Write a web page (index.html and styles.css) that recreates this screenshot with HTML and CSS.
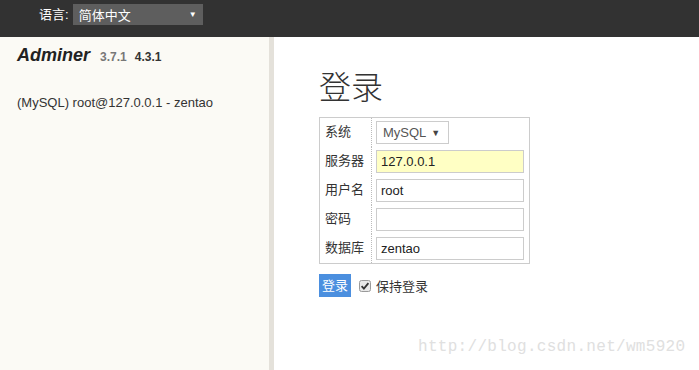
FILE: index.html
```html
<!DOCTYPE html>
<html lang="zh-CN">
    <head>
        <meta charset="UTF-8" />
        <title>登录 - Adminer</title>
        <link rel="stylesheet" href="styles.css">
    </head>
    <body>
        <!-- 顶部语言栏 -->
        <div class="lang-bar">
            <span class="lang-label">语言:</span>
            <div class="lang-select">
                <span>简体中文</span>
                <span class="caret">▼</span>
            </div>
        </div>
        <div class="layout">
            <!-- 左侧菜单 -->
            <div class="menu">
                <h1 class="logo">
                    <span class="logo-name">Adminer</span>
                    <span class="ver-old">3.7.1</span>
                    <span class="ver-new">4.3.1</span>
                </h1>
                <p class="conn">(MySQL) root@127.0.0.1 - zentao</p>
            </div>
            <!-- 登录表单 -->
            <div class="content">
                <h2 class="title">登录</h2>
                <table class="login-table">
                    <tr>
                        <th>系统</th>
                        <td><div class="select">MySQL <span class="caret">▼</span></div></td>
                    </tr>
                    <tr>
                        <th>服务器</th>
                        <td><div class="input input-hl">127.0.0.1</div></td>
                    </tr>
                    <tr>
                        <th>用户名</th>
                        <td><div class="input">root</div></td>
                    </tr>
                    <tr>
                        <th>密码</th>
                        <td><div class="input"></div></td>
                    </tr>
                    <tr>
                        <th>数据库</th>
                        <td><div class="input">zentao</div></td>
                    </tr>
                </table>
                <div class="actions">
                    <span class="btn">登录</span>
                    <span class="check">
                        <svg width="12" height="12" viewBox="0 0 12 12">
                            <rect x="0.5" y="0.5" width="11" height="11" rx="2" fill="#e8e8e8" stroke="#9a9a9a" />
                            <path d="M2.6 6.2 L4.9 8.6 L9.4 3.2" fill="none" stroke="#333" stroke-width="1.8" />
                        </svg>
                        保持登录
                    </span>
                </div>
                <div class="watermark">http://blog.csdn.net/wm5920</div>
            </div>
        </div>
    </body>
</html>
```

FILE: styles.css
```css
* {
    margin: 0;
    padding: 0;
    box-sizing: border-box;
}
body {
    width: 699px;
    height: 370px;
    overflow: hidden;
    font-family: "Liberation Sans", "Noto Sans CJK SC", sans-serif;
    font-size: 13px;
    color: #333;
    background: #fff;
}

.lang-bar {
    height: 37px;
    background: #323232;
    display: flex;
    align-items: flex-start;
    padding: 4px 0 0 39px;
    color: #fff;
}
.lang-label {
    line-height: 21px;
    margin-right: 4px;
}
.lang-select {
    width: 130px;
    height: 21px;
    background: #5e5e5e;
    display: flex;
    justify-content: space-between;
    align-items: center;
    padding: 0 6px 0 6px;
    color: #fff;
    .caret {
        font-size: 8px;
    }
}

.layout {
    display: flex;
    height: 333px;
}
.menu {
    width: 274px;
    background: #fbfaf5;
    border-right: 5px solid #e4e1da;
    padding: 8px 0 0 17px;
}
.logo {
    display: flex;
    align-items: baseline;
    gap: 8px;
    font-weight: bold;
    .logo-name {
        font-size: 18px;
        font-style: italic;
        color: #222;
        margin-right: 2px;
    }
    .ver-old {
        font-size: 12px;
        color: #777;
    }
    .ver-new {
        font-size: 12px;
        color: #333;
    }
}
.conn {
    margin-top: 29px;
    color: #333;
}

.content {
    flex: 1;
    padding: 26px 0 0 45px;
    position: relative;
}
.title {
    font-family: "Noto Sans CJK SC", sans-serif;
    font-weight: 300;
    font-size: 32px;
    line-height: 44px;
    color: #333;
    margin-bottom: 10px;
}
.login-table {
    border-collapse: collapse;
    border: 1px solid #ccc;
    th {
        font-weight: normal;
        text-align: left;
        vertical-align: top;
        padding: 3px 4px 0 5px;
        width: 52px;
        height: 29px;
        border-right: 1px dotted #bbb;
    }
    td {
        padding: 3px 5px 3px 4px;
        height: 29px;
    }
}
.select {
    width: 73px;
    height: 23px;
    border: 1px solid #ccc;
    display: flex;
    align-items: center;
    padding-left: 6px;
    color: #555;
    .caret {
        font-size: 9px;
        margin-left: 5px;
        color: #444;
    }
}
.input {
    width: 148px;
    height: 23px;
    border: 1px solid #ccc;
    padding-left: 4px;
    line-height: 21px;
    color: #222;
}
.input-hl {
    background: #ffffc4;
}
.actions {
    display: flex;
    align-items: center;
    gap: 8px;
    margin-top: 10px;
}
.btn {
    background: #4b8fdf;
    color: #fff;
    height: 23px;
    line-height: 23px;
    padding: 0 3px;
}
.check {
    display: flex;
    align-items: center;
    gap: 5px;
    svg {
        display: block;
    }
}
.watermark {
    position: absolute;
    left: 144px;
    top: 301px;
    font-family: "Liberation Mono", monospace;
    font-size: 16px;
    color: #e0e0e0;
    letter-spacing: 0.3px;
}
```
